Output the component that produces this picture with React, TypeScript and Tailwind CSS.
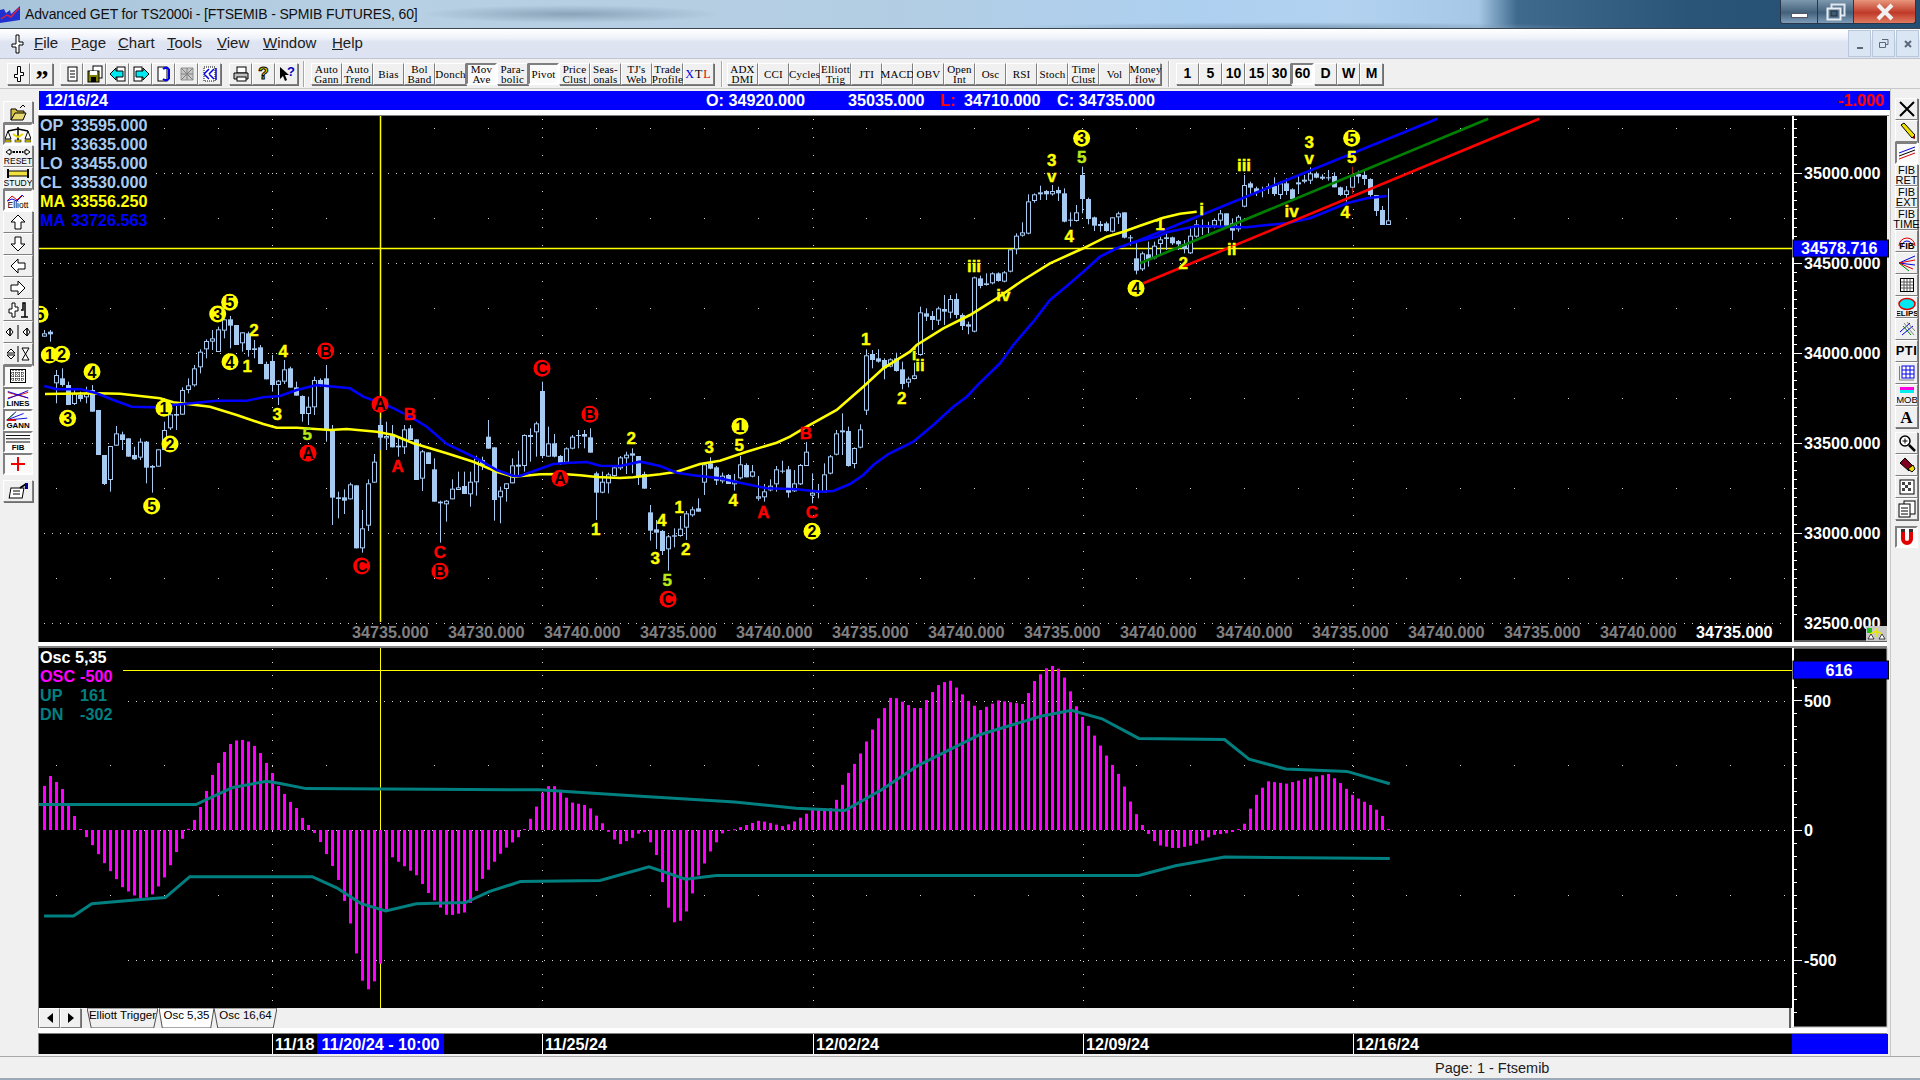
import React from "react";

type C = number[];
const GROUPS: { x: number; b: number; d: C[] }[] = [
  { x: 44, b: 290, d: [
    [130,140,120,140,0],[125,133,120,155,1],[255,280,240,340,0],[265,285,235,290,1],[285,345,275,345,1],[310,342,300,345,0],[315,327,305,335,1],[310,322,290,340,0],[300,365,285,365,1],[360,495,360,495,1],[495,582,495,585,1],[468,570,468,605,0],[430,467,408,467,0],[433,450,425,480,1],[445,500,445,500,1],[495,508,470,510,1],[455,503,445,510,0],[455,533,453,580,1],[528,533,525,608,1],[478,530,478,530,0],[420,480,395,480,0],[373,415,360,420,0],[372,377,340,420,1],[300,374,292,374,0],[286,300,265,310,0],[235,286,225,290,0],[185,232,178,250,0],[153,178,148,205,0],[145,155,120,180,0],[118,186,110,186,0],[88,122,85,145,0],[88,107,78,175,1],[105,165,105,165,1],[127,160,127,185,0],[130,180,125,200,1],[175,180,150,205,1],[172,222,165,222,1],[222,268,215,268,1],[213,285,195,305,1],[272,285,270,345,0],[238,275,210,282,0],[235,293,230,293,1],[292,317,275,317,1],[318,372,316,395,1],[350,372,320,405,0],[270,352,260,375,0],[270,285,265,290,1],[265,420,225,455,1],[418,623,405,705,1],[622,627,605,685,1],[622,632,598,672,1],[583,628,578,628,0],[586,775,586,775,1],[715,775,660,788,0],[580,707,568,723,0],[515,578,492,578,0],[405,443,385,480,1],[438,445,395,480,0],[433,472,405,472,1],[467,472,440,500,1],[418,472,405,492,0],[415,450,405,450,1],[448,570,448,570,1],[484,566,480,603,0],[487,522,487,522,1],[538,635,505,635,1],[635,640,632,758,1],[632,643,630,695,0],[596,628,568,628,0],[592,600,545,600,0],[588,612,545,612,1],[575,613,545,650,0],[505,577,497,617,0],[510,525,500,540,1],[440,476,390,476,1],[472,630,472,692,1],[602,622,590,700,0],[580,597,580,635,0],[526,580,505,580,0],[524,530,482,560,0],[435,528,433,545,0],
  ]},
  { x: 530, b: 330, d: [
    [315,320,295,395,0],[280,307,275,380,0],[183,378,155,385,1],[340,380,290,380,0],[340,380,312,382,1],[378,402,375,405,1],[355,398,352,398,0],[320,356,315,358,0],[315,317,300,355,1],[312,320,300,355,1],[322,368,295,368,1],[430,488,425,570,1],[455,488,425,490,0],[433,460,428,490,0],[412,438,405,440,0],[382,415,378,420,0],[374,385,365,432,0],[370,377,355,430,1],[378,438,378,465,1],[432,476,425,476,1],[547,602,525,632,1],[598,608,570,657,1],[603,663,600,675,1],[619,658,615,722,0],[616,620,595,652,1],[596,618,558,620,0],[550,593,543,630,0],[538,556,530,560,0],[535,545,505,545,1],[403,458,398,495,0],[400,416,382,418,1],[412,452,408,465,1],[437,454,428,460,0],[435,462,432,462,1],[452,463,432,482,0],[403,445,378,448,0],[405,442,400,442,1],[424,440,405,442,0],[499,506,438,512,0],[484,502,462,515,0],[467,481,448,484,0],[418,463,408,485,0],[422,424,392,430,1],[418,488,408,503,1],[460,484,420,486,0],[405,463,402,465,0],[365,408,336,408,0],[488,497,430,520,0],[486,488,462,505,1],[433,487,400,487,0],[379,431,375,433,0],[310,374,300,376,0],[301,307,250,375,0],[303,408,290,410,1],[354,402,352,415,0],[298,353,283,355,0],[76,242,58,255,0],[72,90,60,115,1],[85,95,58,98,1],[90,115,85,148,1],[88,110,85,112,0],[85,123,68,125,1],[118,162,95,178,1],[146,158,140,172,0],[136,147,98,148,0],
  ]},
  { x: 920, b: 125, d: [
    [562,690,545,692,0],[565,575,550,588,1],[573,585,558,615,1],[550,587,545,600,0],[552,560,510,600,1],[522,563,510,580,0],[522,570,505,580,1],[570,603,565,615,1],[598,605,590,628,1],[457,620,455,622,0],[460,483,452,490,1],[475,480,445,482,1],[445,475,442,478,0],[445,468,442,470,1],[442,470,438,472,0],[373,440,373,442,0],[332,373,325,388,0],[322,332,292,335,0],[229,326,208,328,0],[208,228,205,233,0],[202,208,182,225,0],[198,208,195,225,1],[198,208,180,212,0],[195,205,185,228,1],[205,290,190,292,1],[284,286,262,305,1],[262,288,240,290,0],[150,222,125,265,1],[222,282,218,298,1],[277,302,275,318,1],[297,303,288,320,1],[295,318,290,320,1],[277,320,277,322,0],[265,277,260,297,0],[262,338,262,340,1],[337,339,330,362,1],[400,437,355,448,1],[385,433,380,438,0],[388,403,350,425,1],[362,400,350,403,0],[343,357,335,390,0],[337,342,325,375,1],[337,355,335,360,1],[348,358,345,375,1],[358,372,345,385,1],[332,385,305,387,0],[298,335,285,338,0],
  ]},
  { x: 1202, b: 120, d: [
    [315,322,298,345,1],[316,323,305,340,0],[300,317,295,325,0],[280,302,270,320,0],[280,318,280,325,1],[310,332,295,360,1],[290,328,285,335,0],[195,260,165,262,0],[190,203,185,225,1],[205,218,200,228,1],[210,213,200,232,1],[199,205,190,222,0],[198,222,172,228,1],[190,225,185,237,0],[190,213,175,225,1],[208,237,205,242,1],[187,193,168,222,0],[179,185,165,190,0],[160,182,142,192,0],[160,173,155,175,1],[170,176,163,180,1],[172,174,150,182,1],[168,202,157,202,1],[202,225,200,228,1],[211,225,198,245,0],[166,203,140,222,0],[162,170,152,190,1],[165,177,148,195,1],[177,225,175,235,1],[225,273,225,288,1],[270,315,258,315,1],[301,315,205,315,0],
  ]},
];

const z9 = (p: number[][]) => p.map(([x, y]) => [30 + x / 3, 290 + y / 3]);
const z11 = (p: number[][]) => p.map(([x, y]) => [520 + x / 3, 330 + y / 3]);
const z12 = (p: number[][]) => p.map(([x, y]) => [900 + x / 3, 125 + y / 3]);
const z8 = (p: number[][]) => p.map(([x, y]) => [1100 + x / 3, 120 + y / 3]);
const line = (p: number[][]) => p.map((q) => q[0].toFixed(1) + "," + q[1].toFixed(1)).join(" ");

const YELLOW_MA = line([
  ...z9([[45,312],[200,310],[270,311],[390,325],[430,337],[540,350],[620,375],[700,402],[740,413],[800,413],[900,420],[950,417],[1040,425],[1090,435],[1150,460],[1250,490],[1330,515],[1400,545],[1450,560]]),
  ...z11([[30,436],[60,433],[130,432],[180,436],[230,441],[300,444],[340,442],[420,433],[470,425],[540,402],[600,392],[680,365],[770,338],[810,320],[860,290],[950,240],[1030,170],[1090,115],[1170,65]]),
  ...z12([[50,660],[130,610],[210,570],[290,520],[370,465],[450,415],[550,370],[620,335],[670,320],[720,302],[790,278],[840,266],[890,260]]),
]);
const BLUE_MA = line([
  ...z9([[43,288],[80,298],[110,298],[150,297],[200,310],[250,330],[305,350],[370,352],[430,345],[560,332],[650,332],[700,322],[750,318],[800,300],[860,285],[960,295],[1000,320],[1080,350],[1140,380],[1190,410],[1250,462],[1340,505],[1400,540],[1450,558]]),
  ...z11([[0,438],[50,420],[100,402],[150,398],[200,396],[240,407],[300,408],[360,395],[420,408],[470,428],[520,436],[600,445],[660,458],[740,475],[830,478],[900,485],[940,483],[990,462],[1030,435],[1060,405],[1105,372],[1180,335],[1240,285],[1300,230],[1340,200]]),
  ...z12([[235,778],[300,715],[340,660],[400,590],[450,525],[510,475],[550,440],[600,395],[650,370],[700,352],[770,335],[800,322],[890,303]]),
  ...z8([[380,320],[440,322],[500,315],[560,310],[630,295],[740,250],[800,235],[860,228]]),
]);

type W = [number[], string, number];
const pick = (f: (p: number[][]) => number[][], x: number, y: number) => f([[x, y]])[0];
const WAVES: W[] = [
  [pick(z9,30,73),"5",0],[pick(z9,58,195),"1",0],[pick(z9,95,193),"2",0],[pick(z9,186,245),"4",0],[pick(z9,113,385),"3",0],[pick(z9,563,72),"3",0],[pick(z9,599,37),"5",0],[pick(z9,600,215),"4",0],[pick(z9,402,355),"1",0],[pick(z9,420,462),"2",0],[pick(z9,365,648),"5",0],
  [pick(z9,672,120),"2",2],[pick(z9,760,183),"4",2],[pick(z9,652,228),"1",2],[pick(z9,742,372),"3",2],[pick(z9,832,433),"5",4],
  [pick(z9,887,183),"B",1],[pick(z9,834,490),"A",1],[pick(z9,1050,343),"A",1],[pick(z9,995,828),"C",1],[pick(z9,1230,844),"B",1],
  [pick(z9,1140,372),"B",3],[pick(z9,1103,528),"A",3],[pick(z9,1230,785),"C",3],
  [pick(z11,66,115),"C",1],[pick(z11,210,253),"B",1],[pick(z11,120,445),"A",1],[pick(z11,444,808),"C",1],[pick(z11,660,289),"1",0],[pick(z11,876,604),"2",0],
  [pick(z11,334,324),"2",2],[pick(z11,227,597),"1",2],[pick(z11,568,351),"3",2],[pick(z11,658,345),"5",2],[pick(z11,640,510),"4",2],[pick(z11,425,570),"4",2],[pick(z11,406,684),"3",2],[pick(z11,478,530),"1",2],[pick(z11,497,657),"2",2],[pick(z11,442,750),"5",4],[pick(z11,1145,205),"2",2],[pick(z11,1037,28),"1",2],[pick(z11,1182,73),"i",2],[pick(z11,1200,105),"ii",2],
  [pick(z11,858,310),"B",3],[pick(z11,730,545),"A",3],[pick(z11,876,547),"C",3],
  [pick(z12,545,40),"3",0],[pick(z12,708,490),"4",0],[pick(z12,545,97),"5",4],[pick(z12,455,105),"3",2],[pick(z12,455,153),"v",2],[pick(z12,222,423),"iii",2],[pick(z12,310,510),"iv",2],[pick(z12,508,333),"4",2],[pick(z12,850,415),"2",2],[pick(z12,780,298),"1",2],
  [pick(z8,755,55),"5",0],[pick(z8,628,67),"3",2],[pick(z8,628,115),"v",2],[pick(z8,755,112),"5",2],[pick(z8,432,135),"iii",2],[pick(z8,305,268),"i",2],[pick(z8,575,272),"iv",2],[pick(z8,736,275),"4",2],[pick(z8,395,388),"ii",2],
];

const S = 1.2245;
const scale = (p: number[][]) => p.map(([x, y]) => [x * S, y * S]);
const ENVELOPE = [
  [44,786],[50,776],[56,782],[62,789],[68,803],[74,816],[80,829],
  ...scale([[75,690],[85,705],[100,725],[115,735],[125,730],[135,715],[150,682]]),
  [194,820],[200,807],[206,791],[212,775],[218,763],[224,752],[230,744],[236,740.5],[242,740],[248,741.5],[254,746],[260,753],[266,763],[272,773],[278,786],[284,794],[290,802],[296,808],[302,818],[308,825],
  ...scale([[260,685],[275,715],[285,750],[295,800],[302,810],[310,790],[320,700],[340,715],[350,730],[365,748],[380,745],[395,715],[410,695],[425,682],[435,665],[445,642],[455,642],[465,655],[480,658],[490,670],[497,680],[505,690],[515,685],[525,678],[535,695],[545,740],[552,757],[560,745],[570,715],[580,695],[590,680],[600,677],[620,670],[640,675],[650,670],[665,660],[680,660],[690,635],[700,620],[715,590],[728,568],[740,575],[750,580],[765,560],[775,555],[790,572],[800,580],[815,572],[835,575],[845,555],[855,545],[862,543],[870,555],[880,580],[890,595],[905,620],[915,635],[925,660],[935,678],[945,690],[960,693],[975,690],[990,682],[1005,680],[1015,675],[1025,650],[1035,638],[1050,640],[1070,635],[1085,632],[1095,640],[1105,650],[1120,658],[1128,665],[1134,678]]),
].sort((a, b) => a[0] - b[0]);
const oscAt = (x: number) => {
  for (let i = 1; i < ENVELOPE.length; i++) {
    const [x0, y0] = ENVELOPE[i - 1];
    const [x1, y1] = ENVELOPE[i];
    if (x <= x1) return y0 + ((y1 - y0) * (x - x0)) / Math.max(x1 - x0, 1);
  }
  return 829;
};
const OSC_X = Array.from({ length: 225 }, (_, i) => 44 + 6 * i);
const UP_LINE = line(scale([[29,657],[160,657],[190,643],[218,638],[230,640],[250,644],[440,645],[520,650],[600,655],[650,660],[690,662],[720,645],[750,625],[800,600],[850,585],[875,580],[900,587],[930,603],[1000,604],[1020,620],[1050,628],[1100,630],[1135,640]]));
const DN_LINE = line(scale([[36,748],[60,748],[75,738],[110,735],[135,733],[155,716],[255,716],[275,725],[295,738],[315,744],[340,738],[380,737],[400,728],[425,720],[490,719],[530,708],[560,718],[585,715],[930,715],[960,707],[1000,700],[1135,701]]));

const DATE_X = [272, 542, 813, 1083, 1353];
const LOWER = [352, 448, 544, 640, 736, 832, 928, 1024, 1120, 1216, 1312, 1408, 1504, 1600, 1696];
const LOWER_V = ["34735","34730","34740","34735","34740","34735","34740","34735","34740","34740","34735","34740","34735","34740","34735"];
const PRICE = [["35000.000",173],["34500.000",263],["34000.000",353],["33500.000",443],["33000.000",533],["32500.000",623]] as [string, number][];
const LEGEND: [string, string, string, number][] = [
  ["OP","33595.000","#a6caf0",125],["HI","33635.000","#a6caf0",144],["LO","33455.000","#a6caf0",163],["CL","33530.000","#a6caf0",182],["MA","33556.250","#ffff00",201],["MA","33726.563","#0000ff",220],
];

function MainChart() {
  return (
    <svg viewBox="39 116 1753 526" className="block w-[1753px] h-[526px] bg-black">
      {PRICE.map(([, y]) => <line key={y} x1="44" x2="1785" y1={y + 0.5} y2={y + 0.5} stroke="#d8d8d8" strokeDasharray="1 7" />)}
      {[128, 218, 308, 398, 488, 578].map((y) => <line key={y} x1="56" x2="1785" y1={y + 0.5} y2={y + 0.5} stroke="#d8d8d8" strokeDasharray="1 53" />)}
      {DATE_X.map((x) => <line key={x} x1={x + 0.5} x2={x + 0.5} y1="119" y2="622" stroke="#d8d8d8" strokeDasharray="1 17" />)}
      <rect x="39" y="116" width="112" height="113" fill="#000" />
      <line x1="39" x2="1792" y1="248.5" y2="248.5" stroke="#ffff00" strokeWidth="1.5" />
      <line x1="380.5" x2="380.5" y1="116" y2="622" stroke="#ffff00" strokeWidth="1.5" />
      {GROUPS.map((g) => g.d.map((c, i) => {
        const x = g.x + 6 * i;
        const t = g.b + c[0] / 3, b = g.b + c[1] / 3, h = g.b + c[2] / 3, l = g.b + c[3] / 3;
        return (
          <g key={x}>
            <line x1={x + 0.5} x2={x + 0.5} y1={h} y2={l} stroke={x === 1352 ? "#a02020" : "#a6caf0"} />
            {c[4] ? <rect x={x - 2} y={t} width="5" height={Math.max(b - t, 1)} fill="#a6caf0" />
              : <rect x={x - 1.5} y={t + 0.5} width="4" height={Math.max(b - t - 1, 1)} fill="#000" stroke="#a6caf0" />}
          </g>
        );
      }))}
      <polyline points={YELLOW_MA} fill="none" stroke="#ffff00" strokeWidth="2.6" />
      <polyline points={BLUE_MA} fill="none" stroke="#0000ff" strokeWidth="2.6" />
      <polyline points={line(z8([[100,368],[1012,-4]]))} fill="none" stroke="#0000ff" strokeWidth="2.6" />
      <polyline points={line(z8([[120,430],[1165,-4]]))} fill="none" stroke="#008000" strokeWidth="2.6" />
      <polyline points={line(z8([[130,490],[1318,-4]]))} fill="none" stroke="#ff0000" strokeWidth="2.6" />
      {WAVES.map(([p, s, k], i) => (
        <g key={i} fontWeight="700" textAnchor="middle">
          {k < 2 && <circle cx={p[0]} cy={p[1]} r="8.5" fill={k === 0 ? "#ffff00" : "#ff0000"} />}
          <text x={p[0]} y={p[1] + 6} fill={k < 2 ? "#000" : k === 3 ? "#ff0000" : k === 4 ? "#b8e818" : "#ffff00"} stroke={k < 2 ? "none" : k === 3 ? "#ff0000" : k === 4 ? "#b8e818" : "#ffff00"} strokeWidth="0.4" fontSize={k < 2 ? 16 : 17}>{s}</text>
        </g>
      ))}
      {LEGEND.map(([a, b, c, y]) => (
        <g key={a + y} fill={c} fontWeight="700" fontSize="16.2">
          <text x="40" y={y + 6}>{a}</text>
          <text x="71" y={y + 6}>{b}</text>
        </g>
      ))}
      {LOWER.map((x, i) => <text key={x} x={x} y="638" fontSize="16.2" fontWeight="700" fill={i === 14 ? "#fff" : "#808080"}>{LOWER_V[i]}.000</text>)}
    </svg>
  );
}

function MainAxis() {
  const ticks = Array.from({ length: 56 }, (_, i) => 119 + 9 * i + 0);
  return (
    <svg viewBox="1792 116 97 526" className="block w-[97px] h-[526px] bg-[#f0f0f0]">
      <rect x="1792" y="116" width="95" height="526" fill="#000" />
      <rect x="1792" y="116" width="2" height="526" fill="#fff" />
      <line x1="1792" x2="1887" y1="641" y2="641" stroke="#c0c0c0" />
      {ticks.map((y) => {
        const major = (y - 173) % 90 === 0;
        return <line key={y} x1="1794" x2={major ? 1802 : 1797} y1={y + 0.5} y2={y + 0.5} stroke="#fff" />;
      })}
      {PRICE.map(([s, y]) => <text key={y} x="1804" y={y + 6} fontSize="16.2" fontWeight="700" fill="#fff">{s}</text>)}
      <rect x="1793" y="240" width="95.5" height="17" fill="#0000ff" stroke="#000" />
      <text x="1801" y="254" fontSize="16.2" fontWeight="700" fill="#fff">34578.716</text>
      <rect x="1866" y="626" width="21" height="15" fill="#c8c8c8" />
      <rect x="1867" y="628" width="5" height="5" fill="#20c020" />
      <path d="M1870 634l6-3 6 3M1876 628v9" stroke="#e8e800" strokeWidth="1.5" fill="none" />
      <path d="M1868 639l3-5 3 5zM1879 639l3-5 3 5z" fill="#fff" stroke="#000" strokeWidth="0.7" />
    </svg>
  );
}

function OscChart() {
  return (
    <svg viewBox="39 648 1753 360" className="block w-[1753px] h-[360px] bg-black">
      {[701, 830, 960].map((y) => <line key={y} x1="128" x2="1785" y1={y + 0.5} y2={y + 0.5} stroke="#d8d8d8" strokeDasharray="1 7" />)}
      {[765, 895].map((y) => <line key={y} x1="56" x2="1785" y1={y + 0.5} y2={y + 0.5} stroke="#d8d8d8" strokeDasharray="1 53" />)}
      {DATE_X.map((x) => <line key={x} x1={x + 0.5} x2={x + 0.5} y1="649" y2="1008" stroke="#d8d8d8" strokeDasharray="1 12" />)}
      <line x1="123" x2="1792" y1="670.5" y2="670.5" stroke="#ffff00" />
      <line x1="380.5" x2="380.5" y1="648" y2="1008" stroke="#ffff00" />
      {OSC_X.map((x) => {
        const y = oscAt(x);
        const top = Math.min(y, 830), h = Math.max(Math.abs(y - 830), 1);
        return <rect key={x} x={x - 1} y={top} width="3" height={h} fill="#ff00ff" />;
      })}
      <polyline points={UP_LINE} fill="none" stroke="#008080" strokeWidth="3" />
      <polyline points={DN_LINE} fill="none" stroke="#008080" strokeWidth="3" />
      <g fontSize="16.2" fontWeight="700">
        <text x="40" y="663" fill="#fff">Osc 5,35</text>
        <text x="40" y="682" fill="#ff00ff">OSC</text>
        <text x="80" y="682" fill="#ff00ff">-500</text>
        <text x="40" y="701" fill="#008080">UP</text>
        <text x="80" y="701" fill="#008080">161</text>
        <text x="40" y="720" fill="#008080">DN</text>
        <text x="80" y="720" fill="#008080">-302</text>
      </g>
    </svg>
  );
}

function OscAxis() {
  const ticks = Array.from({ length: 28 }, (_, i) => 662 + 13 * i - 0);
  return (
    <svg viewBox="1792 648 97 380" className="block w-[97px] h-[380px] bg-[#f0f0f0]">
      <rect x="1792" y="648" width="95" height="379" fill="#000" stroke="#c0c0c0" />
      <rect x="1792" y="648" width="2" height="379" fill="#fff" />
      {ticks.map((y) => {
        const major = y === 701 || y === 831 || y === 961;
        return <line key={y} x1="1794" x2={major ? 1802 : 1797} y1={y - 0.5} y2={y - 0.5} stroke="#fff" />;
      })}
      <g fontSize="16.2" fontWeight="700" fill="#fff">
        <text x="1804" y="707">500</text>
        <text x="1804" y="836">0</text>
        <text x="1804" y="966">-500</text>
      </g>
      <rect x="1793" y="661" width="95.5" height="18" fill="#0000ff" stroke="#000" />
      <text x="1839" y="676" textAnchor="middle" fontSize="16.2" fontWeight="700" fill="#fff">616</text>
    </svg>
  );
}

const RAISED = "border border-t-white border-l-white border-r-[#808080] border-b-[#808080] shadow-[1px_1px_0_#6e6e6e] bg-[#f0f0f0]";
const SUNKEN = "border-2 border-t-[#808080] border-l-[#808080] border-r-white border-b-white bg-[#fafafa]";

function TopBtn({ children, down }: { children: React.ReactNode; down?: boolean }) {
  return <div className={"w-[23px] h-[22px] shrink-0 flex items-center justify-center " + (down ? SUNKEN : RAISED)}>{children}</div>;
}
function TextBtn({ a, b, down }: { a: string; b?: string; down?: boolean }) {
  return (
    <div className={"w-[31px] h-[22px] shrink-0 flex flex-col items-center justify-center font-['Liberation_Serif',serif] text-[11px] leading-[10px] tracking-[0.2px] text-black " + (down ? SUNKEN : RAISED)}>
      <span>{a}</span>
      {b && <span>{b}</span>}
    </div>
  );
}
function SideBtn({ children, down }: { children: React.ReactNode; down?: boolean }) {
  return <div className={"w-[30px] h-[22px] shrink-0 flex items-center justify-center " + (down ? SUNKEN : RAISED)}>{children}</div>;
}
function RightBtn({ children, down }: { children: React.ReactNode; down?: boolean }) {
  return <div className={"w-[23px] h-[22px] shrink-0 flex items-center justify-center " + (down ? SUNKEN : RAISED)}>{children}</div>;
}
function Ic({ children, w = 18, h = 18 }: { children: React.ReactNode; w?: number; h?: number }) {
  return <svg width={w} height={h} viewBox={`0 0 ${w} ${h}`} className="block">{children}</svg>;
}
const CROSS = "M7.5 1.5h3v6h3v3h-3v6h-3v-4h-3v-3h3z";
const Doc = ({ x = 5, y = 2 }: { x?: number; y?: number }) => (
  <g><rect x={x} y={y} width="9" height="14" fill="#fff" stroke="#000" /><path d={`M${x + 2} ${y + 4}h5M${x + 2} ${y + 7}h5M${x + 2} ${y + 10}h5`} stroke="#000" /></g>
);
const Scales = () => (
  <g>
    <path d="M4 6l10-2 10 2M14 2v13" stroke="#000" strokeWidth="1.5" fill="none" />
    <path d="M9 9l5 3 5-3" stroke="#e8d800" strokeWidth="2" fill="none" />
    <path d="M1 14l3-8 3 8zM21 14l3-8 3 8z" fill="#fff" stroke="#000" />
    <rect x="1" y="15" width="6" height="2" fill="#e8d800" stroke="#000" strokeWidth="0.5" />
    <rect x="21" y="15" width="6" height="2" fill="#e8d800" stroke="#000" strokeWidth="0.5" />
    <rect x="11" y="15" width="6" height="2" fill="#e8d800" stroke="#000" strokeWidth="0.5" />
  </g>
);

function LeftBar() {
  const outline = { fill: "#fff", stroke: "#000", strokeWidth: 1 };
  return (
    <div className="w-[36px] shrink-0 flex flex-col items-start pl-[3px] pt-[12px]">
      <SideBtn><Ic w={20} h={18}><path d="M3 6h5l1 2h7v3H7l-4 6z" fill="#d8c040" stroke="#000" /><path d="M3 17l4-7h11l-3 7z" fill="#e8d870" stroke="#000" /><path d="M12 5l3-3 2 2" stroke="#000" fill="none" /></Ic></SideBtn>
      <SideBtn down><Ic w={26} h={18}><g transform="translate(-1,0)"><Scales /></g></Ic></SideBtn>
      <SideBtn><Ic w={28} h={20}><path d="M2 6l4-3v2h2v2H6v2zM26 6l-4-3v2h-2v2h2v2z" {...outline} /><path d="M9 6h10" stroke="#000" strokeDasharray="2 1" strokeWidth="2" /><text x="14" y="18" fontSize="8.5" textAnchor="middle" fill="#000">RESET</text></Ic></SideBtn>
      <SideBtn><Ic w={28} h={20}><rect x="4" y="3" width="20" height="5" fill="#f0e040" stroke="#000" /><path d="M4 1v9M24 1v9" stroke="#000" strokeWidth="2" /><text x="14" y="18" fontSize="8.5" textAnchor="middle" fill="#000">STUDY</text></Ic></SideBtn>
      <SideBtn down><Ic w={26} h={18}><path d="M3 9l4-4 5 4 5-5 2 2" stroke="#e00000" fill="none" /><path d="M2 10l5-2 5 2 6-6" stroke="#0000e0" fill="none" /><text x="13" y="17" fontSize="8.5" textAnchor="middle" fill="#000">Elliott</text></Ic></SideBtn>
      <SideBtn><Ic w={18} h={18}><path d="M9 2l7 7h-4v7H6V9H2z" {...outline} /></Ic></SideBtn>
      <SideBtn><Ic w={18} h={18}><path d="M9 16l7-7h-4V2H6v7H2z" {...outline} /></Ic></SideBtn>
      <SideBtn><Ic w={18} h={18}><path d="M2 9l7-7v4h7v6H9v4z" {...outline} /></Ic></SideBtn>
      <SideBtn><Ic w={18} h={18}><path d="M16 9L9 2v4H2v6h7v4z" {...outline} /></Ic></SideBtn>
      <SideBtn><Ic w={24} h={18}><path d="M3 8h3V2h3v4h3v4H9v6H6V12H3z" fill="#fff" stroke="#000" /><path d="M15 9h2V2h2v14M15 16h7" stroke="#000" strokeWidth="1.5" fill="none" /></Ic></SideBtn>
      <SideBtn><Ic w={26} h={18}><path d="M1 9l4-4v8zM8 9L5 5v8zM18 9l4-4v8zM25 9l-3-4v8z" fill="#fff" stroke="#000" /><path d="M13 2v14" stroke="#000" /></Ic></SideBtn>
      <SideBtn><Ic w={26} h={18}><path d="M2 8l4-4 4 4zM2 10l4 4 4-4z" fill="#fff" stroke="#000" /><path d="M13 1v16" stroke="#000" /><path d="M17 3h7l-3.500 6L24 15h-7l3.500-6z" fill="#fff" stroke="#000" /></Ic></SideBtn>
      <SideBtn down><Ic w={18} h={16}><rect x="1.500" y="1.500" width="15" height="13" fill="#fff" stroke="#000" /><path d="M4 2v12M7 2v12M10 2v12M13 2v12M2 5h14M2 8h14M2 11h14" stroke="#000" strokeDasharray="1 1" /></Ic></SideBtn>
      <SideBtn down><Ic w={28} h={20}><path d="M3 4l22 6M3 10l22-6" stroke="#e00000" fill="none" /><path d="M3 3l22 7M3 11L25 2" stroke="#0000e0" fill="none" /><text x="14" y="19" fontSize="8.5" fontWeight="700" textAnchor="middle" fill="#000">LINES</text></Ic></SideBtn>
      <SideBtn down><Ic w={28} h={20}><path d="M2 10L12 1M2 10l18-7M2 10l22-2" stroke="#0000e0" fill="none" /><path d="M2 10l8-7" stroke="#008000" fill="none" /><path d="M2 10h10" stroke="#e00000" strokeWidth="2" /><text x="14" y="19" fontSize="8.5" fontWeight="700" textAnchor="middle" fill="#000">GANN</text></Ic></SideBtn>
      <SideBtn down><Ic w={28} h={20}><path d="M1 3h26M1 6.500h26M1 10h26" stroke="#000" /><text x="14" y="19" fontSize="8.5" fontWeight="700" textAnchor="middle" fill="#000">FIB</text></Ic></SideBtn>
      <SideBtn down><Ic w={18} h={18}><path d="M9 2v14M2 9h14" stroke="#f00000" strokeWidth="2" /></Ic></SideBtn>
      <div className="mt-[5px]">
        <SideBtn><Ic w={24} h={18}><rect x="4" y="6" width="13" height="10" fill="#fff" stroke="#000" transform="skewX(-10) translate(2,0)" /><path d="M7 9h7M7 12h7" stroke="#000" /><path d="M14 6l6-4" stroke="#000" strokeWidth="2" /><rect x="19" y="1" width="3" height="6" fill="#0000a0" /></Ic></SideBtn>
      </div>
    </div>
  );
}

function RightBar() {
  const txt = "font-['Liberation_Sans',sans-serif] text-[11px] leading-[10px] text-center text-black flex flex-col items-center";
  return (
    <div className="w-[30px] shrink-0 flex flex-col items-start pl-[4px] pt-[9px] border-l border-[#c8c8c8]">
      <RightBtn><Ic w={18} h={18}><path d="M2 2l14 14M16 2L2 16" stroke="#000" strokeWidth="2" /></Ic></RightBtn>
      <RightBtn><Ic w={18} h={18}><path d="M3 3l3-2 11 12-3 3z" fill="#f0e000" stroke="#000" /><path d="M14 16l3-3 0 4z" fill="#800000" /></Ic></RightBtn>
      <RightBtn down><Ic w={18} h={16}><path d="M1 8l16-6" stroke="#0000e0" /><path d="M1 11l16-6" stroke="#000" /><path d="M1 14l16-6" stroke="#e00000" /></Ic></RightBtn>
      <RightBtn><div className={txt}><span>FIB</span><span>RET</span></div></RightBtn>
      <RightBtn><div className={txt}><span>FIB</span><span>EXT</span></div></RightBtn>
      <RightBtn><div className={txt}><span>FIB</span><span>TIME</span></div></RightBtn>
      <RightBtn><Ic w={20} h={18}><path d="M2 14a8 8 0 0 1 16 0" fill="none" stroke="#e00000" /><path d="M5 14a5 5 0 0 1 10 0" fill="none" stroke="#0000e0" /><text x="10" y="17" fontSize="9.5" fontWeight="700" textAnchor="middle" fill="#000">FIB</text></Ic></RightBtn>
      <RightBtn><Ic w={20} h={18}><path d="M2 9L18 2M2 9l16 2" stroke="#0000e0" /><path d="M2 9l16-3M2 9l14 6" stroke="#e00000" /><path d="M2 9l10 8" stroke="#008000" /></Ic></RightBtn>
      <RightBtn><Ic w={16} h={16}><rect x="1.500" y="1.500" width="13" height="13" fill="#fff" stroke="#000" /><path d="M5 2v12M8 2v12M11 2v12M2 5h12M2 8h12M2 11h12" stroke="#555" /></Ic></RightBtn>
      <RightBtn><Ic w={20} h={20}><ellipse cx="10" cy="7" rx="8" ry="5.500" fill="#00e8f0" stroke="#e00000" strokeWidth="1.500" /><text x="10" y="19" fontSize="8" fontWeight="700" textAnchor="middle" fill="#000">ELIPS</text></Ic></RightBtn>
      <RightBtn><Ic w={18} h={18}><path d="M2 12L12 3M4 15L15 6" stroke="#0000e0" /><path d="M6 3l10 12M9 2l8 9" stroke="#808080" /><path d="M5 6l8 9" stroke="#008000" /></Ic></RightBtn>
      <RightBtn><span className="font-['Liberation_Sans',sans-serif] font-bold text-[13px] tracking-[0.5px] text-black">PTI</span></RightBtn>
      <RightBtn><Ic w={18} h={18}><rect x="4" y="2" width="12" height="12" fill="#fff" stroke="#0000f0" /><path d="M8 2v12M12 2v12M4 6h12M4 10h12" stroke="#0000f0" /><path d="M1.500 2v14H16" stroke="#808080" fill="none" /></Ic></RightBtn>
      <RightBtn><Ic w={20} h={18}><rect x="3" y="1" width="14" height="3" fill="#ff00e0" /><rect x="3" y="4" width="14" height="3" fill="#00f0f0" /><text x="10" y="17" fontSize="9.500" textAnchor="middle" fill="#000">MOB</text></Ic></RightBtn>
      <RightBtn><span className="font-['Liberation_Serif',serif] font-bold text-[17px] leading-none text-black">A</span></RightBtn>
      <div className="mt-[4px]" />
      <RightBtn><Ic w={18} h={18}><circle cx="7" cy="7" r="5" fill="#fff" stroke="#000" strokeWidth="1.500" /><path d="M11 11l6 6" stroke="#000" strokeWidth="2.500" /><path d="M4.500 7h5M7 4.500v5" stroke="#000" /></Ic></RightBtn>
      <RightBtn><Ic w={18} h={18}><path d="M2 7l5-5 8 8-4 5z" fill="#800020" stroke="#000" /><path d="M10 13l5-4 2 4-3 3z" fill="#f0e000" stroke="#000" /></Ic></RightBtn>
      <RightBtn><Ic w={16} h={16}><rect x="1" y="1" width="14" height="14" fill="#fff" stroke="#000" /><path d="M3 3h3v3H3zM9 3h3v3H9zM6 6h3v3H6zM3 9h3v3H3zM9 9h3v3H9z" fill="#444" /></Ic></RightBtn>
      <RightBtn><Ic w={18} h={18}><rect x="6" y="1" width="11" height="13" fill="#fff" stroke="#000" /><rect x="1" y="4" width="11" height="13" fill="#fff" stroke="#000" /><path d="M3 8h7M3 11h7M3 14h7" stroke="#000" /></Ic></RightBtn>
      <div className="mt-[6px]" />
      <RightBtn down><Ic w={18} h={18}><path d="M3 2h4v9a2 2 0 0 0 4 0V2h4v9a6 6 0 0 1-12 0z" fill="#e00000" /><rect x="3" y="1" width="4" height="3" fill="#303030" /><rect x="11" y="1" width="4" height="3" fill="#303030" /></Ic></RightBtn>
    </div>
  );
}

function Tab({ label, widthClass, active }: { label: string; widthClass: string; active?: boolean }) {
  return (
    <div className={"relative h-[20px] flex items-center justify-center text-[11.5px] text-black " + widthClass}>
      <svg viewBox="0 0 100 20" preserveAspectRatio="none" className="absolute inset-0 w-full h-full">
        <polygon points="0,0 6,20 94,20 100,0" fill={active ? "#ffffff" : "#f0f0f0"} stroke="#505050" vectorEffect="non-scaling-stroke" />
      </svg>
      <span className="relative pb-[4px]">{label}</span>
    </div>
  );
}

function Toolbar() {
  const TIMES = ["1", "5", "10", "15", "30", "60", "D", "W", "M"];
  return (
    <div className="h-[31px] shrink-0 border-t border-[#c0c4cc] flex items-center pl-[7px] bg-[#f0f0f0] border-b border-b-[#c8c8c8]">
      <TopBtn><Ic><path d={CROSS} fill="#fff" stroke="#000" /></Ic></TopBtn>
      <TopBtn><span className="font-['Liberation_Serif',serif] font-bold text-[26px] leading-none h-[14px] tracking-[-1px]">”</span></TopBtn>
      <div className="w-[7px]" />
      <TopBtn><Ic><Doc /></Ic></TopBtn>
      <TopBtn><Ic><rect x="7" y="1" width="9" height="12" fill="#fff" stroke="#000" /><rect x="2" y="6" width="11" height="11" fill="#808000" stroke="#000" /><rect x="4" y="6" width="7" height="4" fill="#fff" /><rect x="5" y="12" width="5" height="5" fill="#000" /></Ic></TopBtn>
      <TopBtn><Ic><rect x="8" y="2" width="8" height="14" fill="#fff" stroke="#000" /><path d="M1 9l6-6v3h7v6H7v3z" fill="#00e8f0" stroke="#000" /></Ic></TopBtn>
      <TopBtn><Ic><rect x="2" y="2" width="8" height="14" fill="#fff" stroke="#000" /><path d="M17 9l-6-6v3H4v6h7v3z" fill="#00e8f0" stroke="#000" /></Ic></TopBtn>
      <TopBtn><Ic><rect x="3" y="2" width="9" height="14" fill="#fff" stroke="#000" /><path d="M8 4a5 5 0 0 1 6 0M14 4v10M8 14a5 5 0 0 0 6 0" stroke="#0000e0" strokeWidth="2" fill="none" /></Ic></TopBtn>
      <TopBtn><Ic><path d="M3 3h12v12H3z" fill="#c8c8c8" stroke="#909090" /><path d="M3 3l12 12M15 3L3 15M9 3v12M3 9h12" stroke="#808080" /></Ic></TopBtn>
      <TopBtn><Ic><rect x="3" y="2" width="11" height="14" fill="#fff" stroke="#000" strokeDasharray="1 1" /><path d="M3 9l5-5M3 9l5 5M8 9l5-5M8 9l5 5M15 3v12" stroke="#0000e0" strokeWidth="1.500" fill="none" /></Ic></TopBtn>
      <div className="w-[8px]" />
      <TopBtn><Ic><rect x="5" y="2" width="9" height="6" fill="#fff" stroke="#000" /><path d="M2 8h14v6H2z" fill="#c0c0c0" stroke="#000" /><rect x="5" y="12" width="9" height="4" fill="#fff" stroke="#000" /></Ic></TopBtn>
      <TopBtn><span className="font-['Liberation_Sans',sans-serif] font-bold text-[17px] leading-none text-[#e8d800] [-webkit-text-stroke:1px_#000]">?</span></TopBtn>
      <TopBtn><Ic><path d="M2 2v12l3-3 2 5 2-1-2-5h4z" fill="#000" /><text x="13" y="11" fontSize="13" fontWeight="700" textAnchor="middle" fill="#0000c0">?</text></Ic></TopBtn>
      <div className="w-[5px]" />
      <div className="w-[2px] h-[26px] border-l border-[#a8a8a8] border-r border-r-white" />
      <div className="w-[6px]" />
      <TextBtn a="Auto" b="Gann" /><TextBtn a="Auto" b="Trend" /><TextBtn a="Bias" /><TextBtn a="Bol" b="Band" /><TextBtn a="Donch" />
      <TextBtn a="Mov" b="Ave" down /><TextBtn a="Para-" b="bolic" /><TextBtn a="Pivot" down /><TextBtn a="Price" b="Clust" /><TextBtn a="Seas-" b="onals" />
      <TextBtn a="TJ's" b="Web" /><TextBtn a="Trade" b="Profile" />
      <div className={"w-[31px] h-[22px] shrink-0 flex items-center justify-center font-['Liberation_Serif',serif] text-[12px] tracking-[1px] " + RAISED}>
        <span className="text-[#0000e0]">X</span><span className="text-black">T</span><span className="text-[#e00000]">L</span>
      </div>
      <div className="w-[7px]" />
      <div className="w-[2px] h-[26px] border-l border-[#a8a8a8] border-r border-r-white" />
      <div className="w-[4px]" />
      <TextBtn a="ADX" b="DMI" /><TextBtn a="CCI" /><TextBtn a="Cycles" /><TextBtn a="Elliott" b="Trig" /><TextBtn a="JTI" /><TextBtn a="MACD" /><TextBtn a="OBV" />
      <TextBtn a="Open" b="Int" /><TextBtn a="Osc" /><TextBtn a="RSI" /><TextBtn a="Stoch" /><TextBtn a="Time" b="Clust" /><TextBtn a="Vol" /><TextBtn a="Money" b="flow" />
      <div className="w-[7px]" />
      <div className="w-[2px] h-[26px] border-l border-[#a8a8a8] border-r border-r-white" />
      <div className="w-[6px]" />
      {TIMES.map((t) => (
        <TopBtn key={t} down={t === "60"}><span className="font-bold text-[14px] text-black">{t}</span></TopBtn>
      ))}
    </div>
  );
}

const MENU = [
  ["F", "ile", "w-[37px]"], ["P", "age", "w-[47px]"], ["C", "hart", "w-[49px]"], ["T", "ools", "w-[50px]"],
  ["V", "iew", "w-[46px]"], ["W", "indow", "w-[69px]"], ["H", "elp", "w-[40px]"],
];

export default function App() {
  return (
    <div className="w-[1920px] h-[1080px] overflow-hidden flex flex-col bg-[#f0f0f0] font-['Liberation_Sans',sans-serif]">
      <div className="h-[29px] shrink-0 border-b border-[#3c4652] flex items-start bg-[radial-gradient(ellipse_150px_9px_at_570px_14px,#8aa3b8,transparent),radial-gradient(ellipse_300px_6px_at_1300px_28px,#7f9db8,transparent),linear-gradient(to_right,#a8c4da_0%,#b8d0e4_20%,#b3cde2_45%,#aed0f0_62%,#b2d2f0_70%,#a6c8e6_77%,#3f6a8e_79%,#2a5478_88%,#234f72_100%)]">
        <svg width="22" height="20" viewBox="0 0 22 20" className="shrink-0 mt-[5px]">
          <path d="M0 5l4-1 2 4 4-3 1 4 9-8v14l-20 3z" fill="#2030d0" />
          <path d="M1 14l6-4 4 2 8-9" stroke="#e02040" strokeWidth="1.500" fill="none" />
        </svg>
        <span className="ml-[3px] mt-[5px] text-[14px] leading-[18px] tracking-[-0.15px] text-[#101010] whitespace-nowrap">Advanced GET for TS2000i - [FTSEMIB - SPMIB FUTURES, 60]</span>
        <div className="ml-auto mr-[4px] h-[24px] flex">
          <div className="w-[38px] h-[24px] flex items-end justify-center pb-[5px] rounded-bl-[3px] border border-t-0 border-[#28384a] bg-[linear-gradient(to_bottom,#7d98ae,#44617c_55%,#7f9db8)]"><div className="w-[17px] h-[5px] bg-white border border-[#556]" /></div>
          <div className="w-[36px] h-[24px] flex items-center justify-center border-b border-r border-[#28384a] bg-[linear-gradient(to_bottom,#7d98ae,#44617c_55%,#7f9db8)]">
            <svg width="20" height="18" viewBox="0 0 20 18"><rect x="5.500" y="1.500" width="13" height="11" fill="none" stroke="#dfe6ee" strokeWidth="2" /><rect x="1.500" y="5.500" width="13" height="11" fill="#5a7690" stroke="#e8eef4" strokeWidth="2" /><rect x="5" y="8" width="6" height="5" fill="#405a72" stroke="#202c38" /></svg>
          </div>
          <div className="w-[62px] h-[24px] flex items-center justify-center rounded-br-[3px] border-b border-r border-[#28384a] bg-[linear-gradient(to_bottom,#e8967c,#c03a28_55%,#e07a60)]">
            <svg width="22" height="18" viewBox="0 0 22 18"><path d="M4 2l14 14M18 2L4 16" stroke="#f0f0f0" strokeWidth="4" /></svg>
          </div>
        </div>
      </div>
      <div className="h-[29px] shrink-0 flex items-center bg-[linear-gradient(to_bottom,#ffffff,#f0f3fa_30%,#dfe4f2_45%,#dde3f2)]">
        <div className="w-[34px] pl-[10px] shrink-0">
          <svg width="16" height="20" viewBox="0 0 16 20"><path d="M6 1h3v7h4v3H9v8H6v-6H2v-3h4z" fill="#fff" stroke="#000" /></svg>
        </div>
        {MENU.map(([a, b, w]) => (
          <span key={a} className={"text-[15px] text-[#202020] " + w}><span className="underline">{a}</span>{b}</span>
        ))}
        <div className="ml-auto mr-[1px] flex gap-[1px] h-[27px] text-[#5a6a7c]">
          <div className="w-[23px] bg-[#dbe6f4] border border-[#b8c8da] flex items-end justify-center pb-[7px]"><div className="w-[6px] h-[2px] bg-[#5a6a7c]" /></div>
          <div className="w-[23px] bg-[#dbe6f4] border border-[#b8c8da] flex items-center justify-center">
            <svg width="10" height="10" viewBox="0 0 10 10"><path d="M3 .5h6v5H7M.5 3.500h6v5h-6z" fill="none" stroke="#5a6a7c" /></svg>
          </div>
          <div className="w-[23px] bg-[#dbe6f4] border border-[#b8c8da] flex items-center justify-center">
            <svg width="10" height="10" viewBox="0 0 10 10"><path d="M2 2l6 6M8 2L2 8" stroke="#5a6a7c" strokeWidth="2" /></svg>
          </div>
        </div>
      </div>
      <Toolbar />
      <div className="h-[967px] shrink-0 flex">
        <LeftBar />
        <div className="w-[1854px] shrink-0 flex flex-col pt-[2px]">
          <div className="ml-[3px] h-[19px] bg-[#0000ff] text-white font-bold text-[16.2px] leading-[19px] flex whitespace-nowrap shrink-0">
            <span className="w-[667px] pl-[6px]">12/16/24</span>
            <span className="w-[142px]">O: 34920.000</span>
            <span className="w-[92px]">35035.000</span>
            <span className="w-[24px] text-[#ff0000]">L:</span>
            <span className="w-[93px]">34710.000</span>
            <span>C: 34735.000</span>
            <span className="ml-auto pr-[6px] text-[#ff0000]">-1.000</span>
          </div>
          <div className="h-[6px] shrink-0 ml-[2px] mr-[1px] bg-white border-b border-[#808080]" />
          <div className="flex ml-[2px] border-l border-[#808080] h-[526px] shrink-0">
            <MainChart />
            <MainAxis />
          </div>
          <div className="h-[6px] shrink-0 ml-[2px] mr-[3px] bg-white border-b-2 border-[#808080]" />
          <div className="flex ml-[2px] border-l border-[#808080] h-[380px] shrink-0">
            <div className="w-[1753px] shrink-0 flex flex-col">
              <OscChart />
              <div className="h-[20px] flex items-start border-r-2 border-[#606060] mr-[1px] bg-[#f0f0f0] text-[#202020]">
                <div className={"w-[21px] h-[20px] flex items-center justify-center " + RAISED}><svg width="6" height="10" viewBox="0 0 6 10"><path d="M6 0v10L0 5z" fill="#000" /></svg></div>
                <div className={"w-[21px] h-[20px] flex items-center justify-center " + RAISED}><svg width="6" height="10" viewBox="0 0 6 10"><path d="M0 0v10l6-5z" fill="#000" /></svg></div>
                <div className="w-[6px]" />
                <Tab label="Elliott Trigger" widthClass="w-[71px]" />
                <div className="w-[1px]" />
                <Tab label="Osc 5,35" widthClass="w-[55px]" active />
                <Tab label="Osc 16,64" widthClass="w-[63px]" />
              </div>
            </div>
            <OscAxis />
          </div>
          <div className="h-[6px] shrink-0 ml-[2px] mr-[3px] bg-white border-b border-[#808080]" />
          <div className="h-[20px] shrink-0 ml-[2px] flex text-white font-bold text-[16.2px] leading-[21px]">
            <div className="w-[1754px] shrink-0 bg-black border-l border-[#808080] flex whitespace-nowrap">
              <span className="ml-[233px] pl-[2px] border-l border-white w-[45px]">11/18</span>
              <span className="bg-[#0000ff] w-[127px] text-center">11/20/24 - 10:00</span>
              <span className="ml-[98px] pl-[2px] border-l border-white w-[271px]">11/25/24</span>
              <span className="pl-[2px] border-l border-white w-[270px]">12/02/24</span>
              <span className="pl-[2px] border-l border-white w-[270px]">12/09/24</span>
              <span className="pl-[2px] border-l border-white">12/16/24</span>
            </div>
            <div className="w-[96px] shrink-0 bg-[#0000ff]" />
          </div>
        </div>
        <RightBar />
      </div>
      <div className="h-[22px] shrink-0 flex border-t border-[#a8a8a8] bg-[#f0f0f0] text-[14.5px] leading-[23px] text-[#202020]">
        <span className="ml-[1435px]">Page: 1 - Ftsemib</span>
      </div>
      <div className="h-[2px] shrink-0 bg-[#9aa8b8]" />
    </div>
  );
}
